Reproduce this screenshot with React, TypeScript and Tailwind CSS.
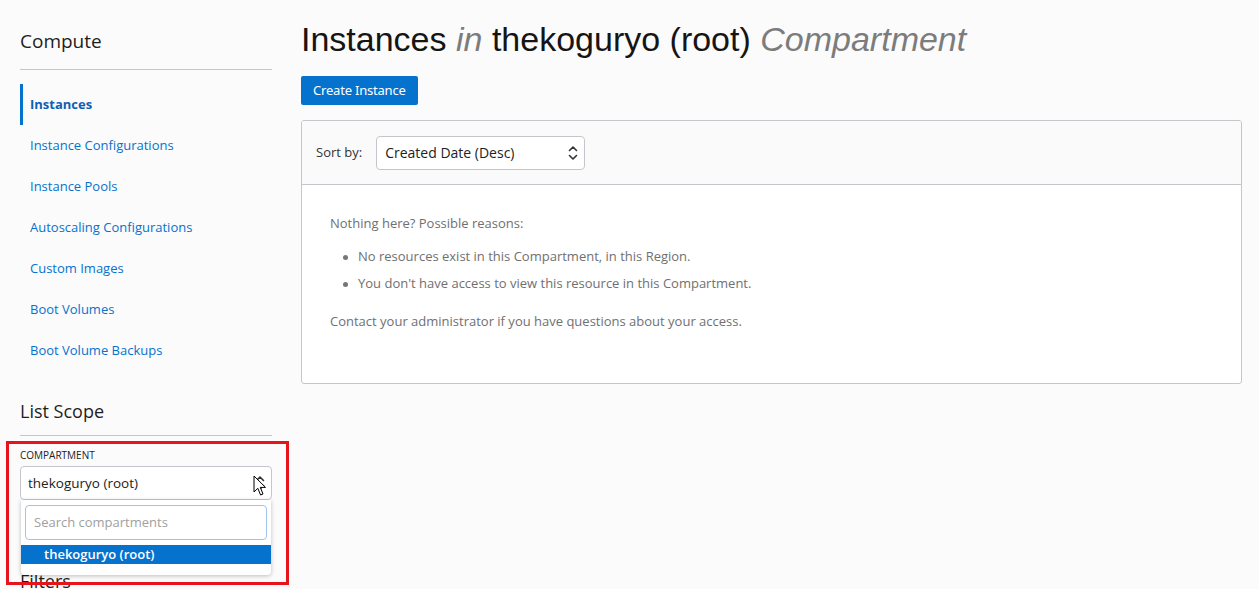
import React from "react";

const links = [
  "Instances",
  "Instance Configurations",
  "Instance Pools",
  "Autoscaling Configurations",
  "Custom Images",
  "Boot Volumes",
  "Boot Volume Backups",
];

const UpDown = ({ className = "" }: { className?: string }) => (
  <svg width="10" height="16" viewBox="0 0 10 16" className={className} fill="none" stroke="#333" strokeWidth="1.6" strokeLinecap="round" strokeLinejoin="round">
    <path d="M1.5 5.5 L5 2 L8.5 5.5" />
    <path d="M1.5 10.5 L5 14 L8.5 10.5" />
  </svg>
);

export default function App() {
  return (
    <div className="relative w-[1259px] h-[589px] overflow-hidden bg-[#fbfbfc] flex font-['Open_Sans',sans-serif] text-[#222]">
      {/* Sidebar */}
      <aside className="relative ml-5 w-[252px] shrink-0 flex flex-col [&>*]:shrink-0">
        <h2 className="mt-[27px] h-[28px] leading-[28px] text-[19px] text-[#1e1e1e]">Compute</h2>
        <div className="mt-[14px] border-t border-[#c4c6cc]" />
        <nav className="mt-[14px] flex flex-col">
          {links.map((l, i) =>
            i === 0 ? (
              <div key={l} className="h-[41px] flex items-center text-[13px] border-l-[3px] border-[#0572ce] pl-[7px] pt-[1px] font-bold text-[#0f5fb3]">
                {l}
              </div>
            ) : (
              <div key={l} className="h-[41px] flex items-center text-[13px] pl-[10px] pt-[1px] text-[#0572ce]">
                {l}
              </div>
            )
          )}
        </nav>
        <h2 className="mt-[26px] h-[28px] leading-[28px] text-[18px] text-[#1e1e1e]">List Scope</h2>
        <div className="mt-[10px] border-t border-[#c4c6cc]" />
        <div className="mt-[12px] h-[14px] leading-[14px] text-[10px] text-[#222] uppercase">Compartment</div>
        <div className="relative mt-[4px] h-[34px] rounded-[4px] border border-[#c4c6cc] bg-white flex items-center pl-[7px] text-[13.5px] text-[#222]">
          thekoguryo (root)
          <UpDown className="absolute right-[6px] top-[8px]" />
          {/* mouse cursor */}
          <svg width="14" height="22" viewBox="0 0 14 22" className="absolute left-[232px] top-[8px]">
            <path d="M1 1 L1 17 L4.8 13.3 L7.6 20 L10 19 L7.3 12.4 L12.5 12.4 Z" fill="white" stroke="black" strokeWidth="1" strokeLinejoin="round" />
          </svg>
        </div>
        <h2 className="mt-[67px] h-[28px] leading-[28px] text-[18px] text-[#1e1e1e]">Filters</h2>

        {/* dropdown overlay */}
        <div className="absolute left-[1px] top-[500px] w-[250px] h-[75px] bg-white rounded-b-[4px] shadow-[0_1px_4px_rgba(0,0,0,0.25)] pt-[5px]">
          <div className="mx-[4px] h-[35px] rounded-[4px] border border-[#9fc3ea] flex items-center pl-[8px] text-[13px] text-[#a0a0a0]">
            Search compartments
          </div>
          <div className="mt-[5px] h-[19px] bg-[#0572ce] text-white text-[13px] font-semibold flex items-center pl-[23px]">
            thekoguryo (root)
          </div>
        </div>
      </aside>

      {/* Main */}
      <main className="ml-[29px] w-[941px] shrink-0 flex flex-col">
        <h1 className="mt-[19px] h-[40px] leading-[40px] text-[34px] font-['Liberation_Sans',Arial,sans-serif] text-[#161513] whitespace-nowrap">
          Instances <span className="italic text-[#7c7c7c]">in</span> thekoguryo (root){" "}
          <span className="italic text-[#7c7c7c]">Compartment</span>
        </h1>
        <div className="mt-[17px]">
          <button className="h-[29px] px-[12px] rounded-[2px] bg-[#0572ce] text-white text-[13px] font-['Noto_Sans',sans-serif] tracking-[-0.2px]">
            Create Instance
          </button>
        </div>
        <section className="mt-[15px] h-[264px] rounded-[3px] border border-[#c4c6cc] bg-white overflow-hidden flex flex-col">
          <div className="h-[64px] bg-[#fafafa] border-b border-[#c4c6cc] flex items-center pl-[14px]">
            <span className="text-[13px] text-[#333]">Sort by:</span>
            <div className="relative ml-[14px] w-[209px] h-[34px] rounded-[4px] border border-[#c4c6cc] bg-white flex items-center pl-[8px] text-[14px] text-[#222]">
              Created Date (Desc)
              <UpDown className="absolute right-[6px] top-[8px]" />
            </div>
          </div>
          <div className="pl-[28px] pt-[28px] text-[13px] text-[#707070]">
            <p className="h-[20px] leading-[20px]">Nothing here? Possible reasons:</p>
            <ul className="mt-[14px] flex flex-col gap-[7px]">
              <li className="h-[20px] flex items-center">
                <span className="ml-[13px] mr-[10px] w-[5px] h-[5px] rounded-full bg-[#777]" />
                No resources exist in this Compartment, in this Region.
              </li>
              <li className="h-[20px] flex items-center">
                <span className="ml-[13px] mr-[10px] w-[5px] h-[5px] rounded-full bg-[#777]" />
                You don't have access to view this resource in this Compartment.
              </li>
            </ul>
            <p className="mt-[17px] h-[20px] leading-[20px]">Contact your administrator if you have questions about your access.</p>
          </div>
        </section>
      </main>

      {/* red annotation box */}
      <div className="absolute left-[6px] top-[441px] w-[283px] h-[144px] border-[3px] border-[#e8141b] pointer-events-none" />
    </div>
  );
}
